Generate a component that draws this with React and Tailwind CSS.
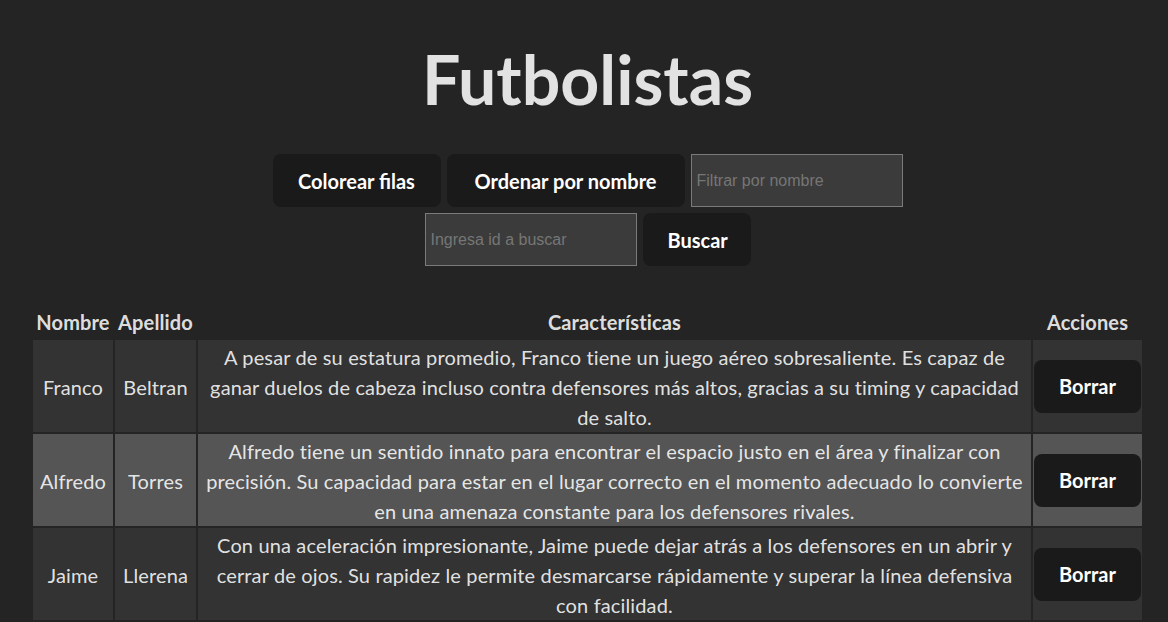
import React from "react";

const rows = [
  {
    nombre: "Franco",
    apellido: "Beltran",
    lines: [
      "A pesar de su estatura promedio, Franco tiene un juego aéreo sobresaliente. Es capaz de",
      "ganar duelos de cabeza incluso contra defensores más altos, gracias a su timing y capacidad",
      "de salto.",
    ],
    bg: "bg-[#333333]",
  },
  {
    nombre: "Alfredo",
    apellido: "Torres",
    lines: [
      "Alfredo tiene un sentido innato para encontrar el espacio justo en el área y finalizar con",
      "precisión. Su capacidad para estar en el lugar correcto en el momento adecuado lo convierte",
      "en una amenaza constante para los defensores rivales.",
    ],
    bg: "bg-[#555555]",
  },
  {
    nombre: "Jaime",
    apellido: "Llerena",
    lines: [
      "Con una aceleración impresionante, Jaime puede dejar atrás a los defensores en un abrir y",
      "cerrar de ojos. Su rapidez le permite desmarcarse rápidamente y superar la línea defensiva",
      "con facilidad.",
    ],
    bg: "bg-[#333333]",
  },
];

function Btn({ children, className = "" }) {
  return (
    <button
      className={
        "h-[53px] rounded-lg border border-transparent bg-[#1a1a1a] px-6 text-[20px] font-bold leading-none text-white " +
        className
      }
    >
      {children}
    </button>
  );
}

function Field({ placeholder }) {
  return (
    <input
      placeholder={placeholder}
      className="h-[53px] w-[212px] border border-[#7a7a7a] bg-[#3b3b3b] px-[5px] font-['Liberation_Sans',Arial,sans-serif] text-[16px] text-white outline-none placeholder:text-[#767676]"
    />
  );
}

export default function App() {
  return (
    <div className="min-h-screen bg-[#242424] pl-[7px] font-['Lato',sans-serif] text-[rgba(255,255,255,0.87)]">
      <h1 className="pt-[43px] text-center text-[68px] font-bold leading-[72px] text-[#e2e2e2]">
        Futbolistas
      </h1>

      <div className="mt-[39px] flex flex-col items-center gap-[6px]">
        <div className="flex items-center gap-[6px]">
          <Btn className="w-[168px]">Colorear filas</Btn>
          <Btn className="w-[238px]">Ordenar por nombre</Btn>
          <Field placeholder="Filtrar por nombre" />
        </div>
        <div className="flex items-center gap-[6px]">
          <Field placeholder="Ingresa id a buscar" />
          <Btn className="w-[108px]">Buscar</Btn>
        </div>
      </div>

      <table className="mx-auto mt-[38px] w-[1113px] table-fixed border-separate border-spacing-[2px] text-[20px] leading-[30px] tracking-[0.14px]">
        <colgroup>
          <col className="w-[80px]" />
          <col className="w-[81px]" />
          <col className="w-[833px]" />
          <col className="w-[109px]" />
        </colgroup>
        <thead>
          <tr>
            <th className="p-px font-bold whitespace-nowrap">Nombre</th>
            <th className="p-px font-bold whitespace-nowrap">Apellido</th>
            <th className="p-px font-bold">Características</th>
            <th className="p-px font-bold">Acciones</th>
          </tr>
        </thead>
        <tbody>
          {rows.map((r) => (
            <tr key={r.nombre} className={r.bg}>
              <td className="px-px pt-[2px] pb-0 text-center align-middle">{r.nombre}</td>
              <td className="px-px pt-[2px] pb-0 text-center align-middle">{r.apellido}</td>
              <td className="px-px pt-[2px] pb-0 text-center align-middle">
                {r.lines.map((l, i) => (
                  <span key={i} className="block whitespace-nowrap">
                    {l}
                  </span>
                ))}
              </td>
              <td className="p-px align-middle">
                <Btn className="w-full tracking-normal">Borrar</Btn>
              </td>
            </tr>
          ))}
        </tbody>
      </table>
    </div>
  );
}
